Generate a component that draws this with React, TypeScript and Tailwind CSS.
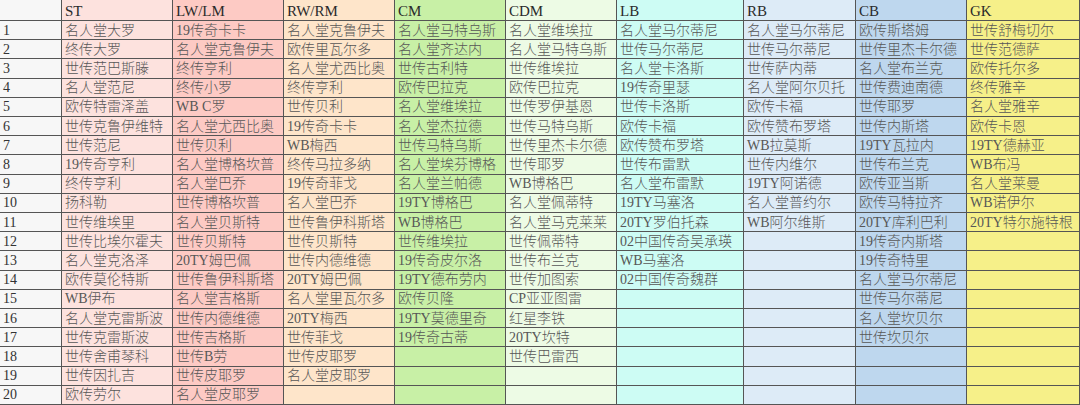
import React from "react"

type Col = { name: string; bg: string; items: string[] }

const cols: Col[] = [
  { name: "ST", bg: "bg-[#fde2de]", items: ["名人堂大罗","终传大罗","世传范巴斯滕","名人堂范尼","欧传特雷泽盖","世传克鲁伊维特","世传范尼","19传奇亨利","终传亨利","扬科勒","世传维埃里","世传比埃尔霍夫","名人堂克洛泽","欧传莫伦特斯","WB伊布","名人堂克雷斯波","世传克雷斯波","世传舍甫琴科","世传因扎吉","欧传劳尔"] },
  { name: "LW/LM", bg: "bg-[#fdcac4]", items: ["19传奇卡卡","名人堂克鲁伊夫","终传亨利","终传小罗","WB C罗","名人堂尤西比奥","世传贝利","名人堂博格坎普","名人堂巴乔","世传博格坎普","名人堂贝斯特","世传贝斯特","20TY姆巴佩","世传鲁伊科斯塔","名人堂吉格斯","世传内德维德","世传吉格斯","世传B劳","世传皮耶罗","名人堂皮耶罗"] },
  { name: "RW/RM", bg: "bg-[#fee5ca]", items: ["名人堂克鲁伊夫","欧传里瓦尔多","名人堂尤西比奥","终传亨利","世传贝利","19传奇卡卡","WB梅西","终传马拉多纳","19传奇菲戈","名人堂巴乔","世传鲁伊科斯塔","世传贝斯特","世传内德维德","20TY姆巴佩","名人堂里瓦尔多","20TY梅西","世传菲戈","世传皮耶罗","名人堂皮耶罗"] },
  { name: "CM", bg: "bg-[#c8f0a6]", items: ["名人堂马特乌斯","名人堂齐达内","世传古利特","欧传巴拉克","名人堂维埃拉","名人堂杰拉德","世传马特乌斯","名人堂埃芬博格","名人堂兰帕德","19TY博格巴","WB博格巴","世传维埃拉","19传奇皮尔洛","19TY德布劳内","欧传贝隆","19TY莫德里奇","19传奇古蒂"] },
  { name: "CDM", bg: "bg-[#edfbe5]", items: ["名人堂维埃拉","名人堂马特乌斯","世传维埃拉","欧传巴拉克","世传罗伊基恩","世传马特乌斯","世传里杰卡尔德","世传耶罗","WB博格巴","名人堂佩蒂特","名人堂马克莱莱","世传佩蒂特","世传布兰克","世传加图索","CP亚亚图雷","红星李铁","20TY坎特","世传巴雷西"] },
  { name: "LB", bg: "bg-[#cdfcf4]", items: ["名人堂马尔蒂尼","世传马尔蒂尼","名人堂卡洛斯","19传奇里瑟","世传卡洛斯","欧传卡福","欧传赞布罗塔","世传布雷默","名人堂布雷默","19TY马塞洛","20TY罗伯托森","02中国传奇吴承瑛","WB马塞洛","02中国传奇魏群"] },
  { name: "RB", bg: "bg-[#ddebf7]", items: ["名人堂马尔蒂尼","世传马尔蒂尼","世传萨内蒂","名人堂阿尔贝托","欧传卡福","欧传赞布罗塔","WB拉莫斯","世传内维尔","19TY阿诺德","名人堂普约尔","WB阿尔维斯"] },
  { name: "CB", bg: "bg-[#bed7ee]", items: ["欧传斯塔姆","世传里杰卡尔德","名人堂布兰克","世传费迪南德","世传耶罗","世传内斯塔","19TY瓦拉内","世传布兰克","欧传亚当斯","欧传马特拉齐","20TY库利巴利","19传奇内斯塔","19传奇特里","名人堂马尔蒂尼","世传马尔蒂尼","名人堂坎贝尔","世传坎贝尔"] },
  { name: "GK", bg: "bg-[#f6f089]", items: ["世传舒梅切尔","世传范德萨","欧传托尔多","终传雅辛","名人堂雅辛","欧传卡恩","19TY德赫亚","WB布冯","名人堂莱曼","WB诺伊尔","20TY特尔施特根"] },
]

const rows = Array.from({ length: 20 }, (_, i) => i)
const font = "font-['Liberation_Serif','Noto_Sans_CJK_SC',serif]"

export default function App() {
  return (
    <div className={`w-[1080px] h-[405px] bg-white overflow-hidden ${font}`}>
      <div className="grid h-full grid-cols-[62px_111px_111px_111px_111px_111px_127px_112px_111px_1fr] grid-rows-[21px_repeat(20,minmax(0,1fr))]">
        <div className="bg-[#f7f7f7] border-r border-b border-[#555]" />
        {cols.map(c => (
          <div key={c.name} className={`${c.bg} border-r border-b border-[#555] flex items-center pt-[2px] pl-[3px] text-[15px] text-[#2a2a2a] leading-none`}>
            {c.name}
          </div>
        ))}
        {rows.map(r => (
          <React.Fragment key={r}>
            <div className="bg-[#f7f7f7] border-r border-b border-[#555] flex items-center pt-px pl-[3px] text-[14px] text-[#333] leading-none">{r + 1}</div>
            {cols.map(c => (
              <div key={c.name} className={`${c.bg} border-r border-b border-[#555] flex items-center pt-px pl-[3px] text-[14px] font-light text-[#575757] leading-none whitespace-nowrap overflow-hidden`}>
                {c.items[r] ?? ""}
              </div>
            ))}
          </React.Fragment>
        ))}
      </div>
    </div>
  )
}
